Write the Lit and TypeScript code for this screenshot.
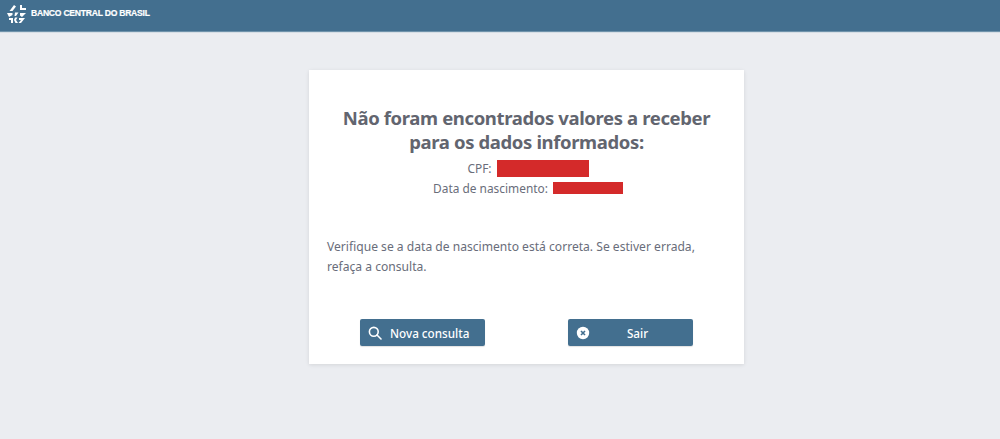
import { LitElement, html, css } from "lit";
import { customElement } from "lit/decorators.js";

@customElement("app-root")
export class AppRoot extends LitElement {
  static styles = css`
    :host { display: flex; flex-direction: column; height: 439px; background: #ebedf1; font-family: "Noto Sans", "Open Sans", sans-serif; color: #696d7a; overflow: hidden; }
    .top { height: 31px; background: #436f8f; box-shadow: 0 1px 1px #6f93ab; display: flex; align-items: center; padding: 0 0 5px 6px; gap: 4px; box-sizing: border-box; flex: none; }
    .logo { width: 21px; height: 20px; flex: none; margin-top: 1px; }
    .brand { color: #fff; font-family: "Liberation Sans", sans-serif; font-size: 8.6px; letter-spacing: -0.25px; font-weight: 700; white-space: nowrap; -webkit-text-stroke: 0.2px #fff; }
    .card { margin: 39px 0 0 309px; width: 435px; height: 294px; background: #fff; box-shadow: 0 1px 4px rgba(0,0,0,.1); box-sizing: border-box; padding: 36px 18px 0; display: flex; flex-direction: column; }
    h1 { margin: 0; font-size: 18.5px; letter-spacing: -0.37px; line-height: 23.5px; font-weight: 700; text-align: center; color: #62656f; white-space: nowrap; }
    .id { display: flex; flex-direction: column; align-items: center; margin-top: 5px; padding-left: 3px; font-size: 11.9px; }
    .line { display: flex; align-items: center; gap: 5px; height: 19px; }
    .line.first { height: 20px; }
    .red { background: #d42a2a; height: 17px; display: block; }
    .r1 { width: 92px; }
    .r2 { width: 70px; height: 12px; }
    p { margin: 40px 0 0; font-size: 12.1px; line-height: 20px; color: #696d7a; }
    .btns { display: flex; justify-content: space-between; margin: 42px 33px 0; }
    .btn { box-sizing: border-box; width: 125px; height: 27px; background: #436f8f; border-radius: 2px; border: 0; color: #fff; font: 500 11.7px "Noto Sans", sans-serif; display: flex; align-items: center; padding: 0 0 0 8px; box-shadow: 0 1px 1px rgba(0,0,0,.12); }
    .btn svg { flex: none; width: 14px; height: 14px; }
    .btn .t1 { margin-left: 8px; white-space: nowrap; }
    .btn .t2 { flex: 1; text-align: center; padding-right: 8px; }
  `;
  render() {
    return html`
      <div class="top">
        <svg class="logo" viewBox="0 0 21 20" fill="#fff">
          <path d="M8 1l2 1.500L6.500 7H3.500zM14 1h2v3h4v2h-6zM1 9h5.500v2L3 13zM9 8.500h3.500L10 12H8.500zM14 9h6l-4 4-2-1.500zM3 14h4v5H5v-3H3zM9 13.500h2.500L10 16l2 3h-2.500L8 16zM13 14h6l-4 5h-2.500l2.500-3h-2z"/>
        </svg>
        <span class="brand">BANCO CENTRAL DO BRASIL</span>
      </div>
      <div class="card">
        <h1>Não foram encontrados valores a receber<br />para os dados informados:</h1>
        <div class="id">
          <div class="line first"><span>CPF:</span><span class="red r1"></span></div>
          <div class="line"><span>Data de nascimento:</span><span class="red r2"></span></div>
        </div>
        <p>Verifique se a data de nascimento está correta. Se estiver errada, refaça a consulta.</p>
        <div class="btns">
          <button class="btn">
            <svg viewBox="0 0 14 14" fill="none" stroke="#fff" stroke-width="1.6"><circle cx="5.800" cy="5.800" r="4.400"/><path d="M9 9l4 4" stroke-linecap="round"/></svg>
            <span class="t1">Nova consulta</span>
          </button>
          <button class="btn">
            <svg viewBox="0 0 14 14"><circle cx="7" cy="7" r="6.200" fill="#fff"/><path d="M5 5l4 4M9 5l-4 4" stroke="#436f8f" stroke-width="1.6"/></svg>
            <span class="t2">Sair</span>
          </button>
        </div>
      </div>
    `;
  }
}
